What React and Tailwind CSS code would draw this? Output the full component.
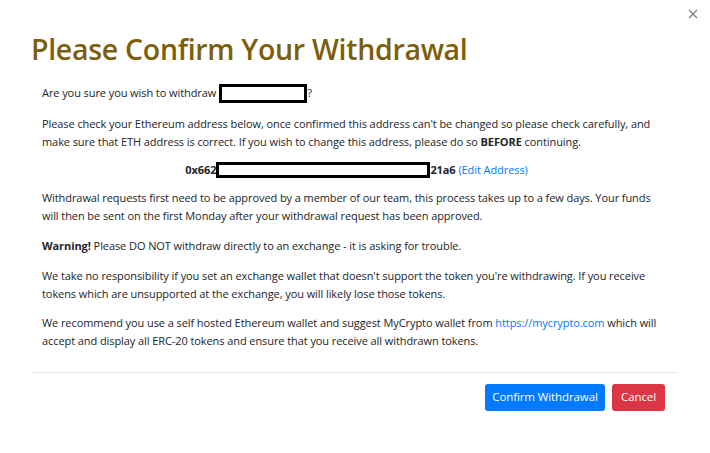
import React from "react";

function Redacted({ className }) {
  return <span className={`inline-block bg-white border-black align-middle ${className}`} />;
}

export default function App() {
  return (
    <div
      className="relative w-[710px] h-[453px] bg-white text-[#212529] overflow-hidden"
      style={{ fontFamily: '"Open Sans", "Noto Sans", sans-serif' }}
    >
      <button className="absolute right-[12px] top-[9px]" aria-label="Close">
        <svg width="10" height="10" viewBox="0 0 10 10">
          <path d="M1 1 L9 9 M9 1 L1 9" stroke="#7a7a7a" strokeWidth="1.2" />
        </svg>
      </button>

      <div className="pl-[31px] pr-[34px] pt-[31px]">
        <h1 className="text-[28.5px] leading-[36px] font-semibold text-[#7d5e0d] tracking-[-0.3px]">
          Please Confirm Your Withdrawal
        </h1>

        <div className="pl-[11px] pr-[11px] pt-[17px] text-[11px] leading-[18px] tracking-[-0.08px] whitespace-nowrap">
          <p className="mb-[12px]">
            Are you sure you wish to withdraw
            <Redacted className="ml-[3px] w-[88px] h-[19px] border-[3px] -mt-[2px]" />?
          </p>
          <p className="mb-[10px]">
            Please check your Ethereum address below, once confirmed this address can't be changed so please check carefully, and
            <br />
            make sure that ETH address is correct. If you wish to change this address, please do so <b>BEFORE</b> continuing.
          </p>
          <p className="mb-[10px] pl-[6px] text-center">
            <b>0x662</b>
            <Redacted className="w-[214px] h-[16px] border-[3px] -mt-[2px]" />
            <b>21a6</b> <span className="text-[#007bff]">(Edit Address)</span>
          </p>
          <p className="mb-[12px]">
            Withdrawal requests first need to be approved by a member of our team, this process takes up to a few days. Your funds
            <br />
            will then be sent on the first Monday after your withdrawal request has been approved.
          </p>
          <p className="mb-[12px]">
            <b>Warning!</b> Please DO NOT withdraw directly to an exchange - it is asking for trouble.
          </p>
          <p className="mb-[11px]">
            We take no responsibility if you set an exchange wallet that doesn't support the token you're withdrawing. If you receive
            <br />
            tokens which are unsupported at the exchange, you will likely lose those tokens.
          </p>
          <p>
            We recommend you use a self hosted Ethereum wallet and suggest MyCrypto wallet from{" "}
            <span className="text-[#007bff]">https://mycrypto.com</span> which will
            <br />
            accept and display all ERC-20 tokens and ensure that you receive all withdrawn tokens.
          </p>
        </div>

        <div className="mt-[22px] border-t border-[#e5e5e5] flex justify-end gap-[7px] pt-[11px] pr-[11px]">
          <button className="h-[27px] w-[120px] rounded-[3px] bg-[#007bff] text-white text-[11.5px] tracking-[-0.1px]">
            Confirm Withdrawal
          </button>
          <button className="h-[27px] w-[53px] rounded-[3px] bg-[#dc3545] text-white text-[11.5px] tracking-[-0.1px]">
            Cancel
          </button>
        </div>
      </div>
    </div>
  );
}
